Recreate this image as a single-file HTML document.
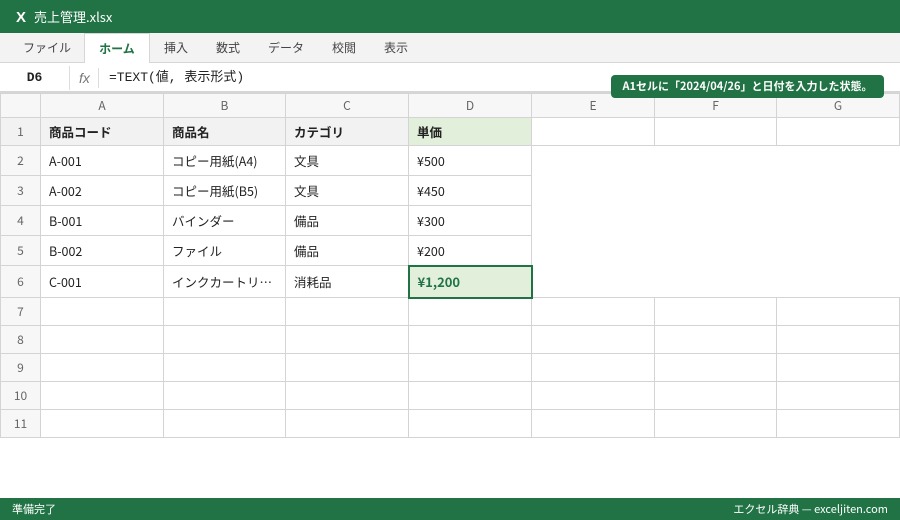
<!DOCTYPE html>
<html><head><meta charset="utf-8"><style>
*{margin:0;padding:0;box-sizing:border-box}
body{width:900px;height:520px;overflow:hidden;background:#fff;font-family:"Liberation Sans","Noto Sans CJK JP",sans-serif;font-size:13px;color:#222;position:relative}
.title{position:absolute;left:0;top:0;width:900px;height:33px;background:#217346;color:#fff;font-family:"Noto Sans CJK JP",sans-serif;font-size:13px;line-height:33px;padding-left:16px}
.title b{font-size:15px;margin-right:8px;font-family:"Liberation Sans",sans-serif}
.tabs{position:absolute;top:33px;left:0;width:900px;height:30px;background:#f3f3f3;border-bottom:1px solid #d6d6d6}
.tab{position:absolute;top:0;height:30px;line-height:30px;font-family:"Noto Sans CJK JP",sans-serif;font-size:12px;color:#444}
.tab.on{background:#fff;border:1px solid #d6d6d6;border-bottom:none;color:#217346;font-weight:bold;height:31px;text-align:center}
.fbar{position:absolute;top:63px;left:0;width:900px;height:30px;border-bottom:2px solid #d6d6d6;background:#fff}
.fbar .nm{position:absolute;left:0;top:3px;width:70px;height:24px;line-height:24px;text-align:center;font-weight:bold;font-size:13px;border-right:1px solid #ddd;font-family:"Liberation Mono",monospace}
.fbar .fx{position:absolute;left:79px;top:3px;line-height:24px;font-style:italic;color:#777;font-family:"Liberation Sans",sans-serif;font-size:14px}
.fbar .sep{position:absolute;left:98px;top:5px;height:20px;border-left:1px solid #ddd}
.fbar .f{position:absolute;left:109px;top:3px;line-height:24px;font-family:"Liberation Mono","Noto Sans CJK JP",monospace;font-size:13px}
table{position:absolute;top:93px;left:0;border-collapse:collapse;table-layout:fixed;font-family:"Noto Sans CJK JP",sans-serif;font-size:12.5px}
td{border:1px solid #d4d4d4;padding:0 8px;white-space:nowrap;overflow:hidden}
tr.h td{background:#f7f7f7;text-align:center;color:#666;font-size:12px}
td.r{background:#f7f7f7;text-align:center;color:#666;padding:0;font-size:12px}
tr.hd td{background:#f2f2f2;font-weight:bold}
td.d1{background:#e2efda!important}
td.n{border-top:none;border-bottom:none;border-left:none;border-right:none}
td.sel{border:2px solid #217346;background:#e2efda;color:#217346;font-weight:bold;font-size:13px}
.tip{position:absolute;left:611px;top:75px;width:273px;height:23px;background:#217346;color:#fff;border-radius:4px;font-family:"Noto Sans CJK JP",sans-serif;font-size:11px;font-weight:bold;line-height:23px;text-align:center}
.status{position:absolute;left:0;top:498px;width:900px;height:22px;background:#217346;color:#fff;font-family:"Noto Sans CJK JP",sans-serif;font-size:11px;line-height:22px;padding:0 12px}
.status span{float:right}
</style></head><body>
<div class="title"><b>X</b>売上管理.xlsx</div>
<div class="tabs">
<div class="tab" style="left:23px">ファイル</div>
<div class="tab on" style="left:84px;width:66px">ホーム</div>
<div class="tab" style="left:164px">挿入</div>
<div class="tab" style="left:216px">数式</div>
<div class="tab" style="left:268px">データ</div>
<div class="tab" style="left:332px">校閲</div>
<div class="tab" style="left:384px">表示</div>
</div>
<div class="fbar"><div class="nm">D6</div><div class="fx">fx</div><div class="sep"></div><div class="f">=TEXT(値, 表示形式)</div></div>
<table>
<colgroup><col style="width:40px"><col style="width:123px"><col style="width:122px"><col style="width:123px"><col style="width:123px"><col style="width:123px"><col style="width:122px"><col style="width:123px"></colgroup>
<tr class="h" style="height:24px"><td></td><td>A</td><td>B</td><td>C</td><td>D</td><td>E</td><td>F</td><td>G</td></tr>
<tr class="hd" style="height:28px"><td class="r" style="font-weight:normal">1</td><td>商品コード</td><td>商品名</td><td>カテゴリ</td><td class="d1">単価</td><td style="background:#fff"></td><td style="background:#fff"></td><td style="background:#fff"></td></tr>
<tr style="height:30px"><td class="r">2</td><td>A-001</td><td>コピー用紙(A4)</td><td>文具</td><td>¥500</td><td class="n"></td><td class="n"></td><td class="n"></td></tr>
<tr style="height:30px"><td class="r">3</td><td>A-002</td><td>コピー用紙(B5)</td><td>文具</td><td>¥450</td><td class="n"></td><td class="n"></td><td class="n"></td></tr>
<tr style="height:30px"><td class="r">4</td><td>B-001</td><td>バインダー</td><td>備品</td><td>¥300</td><td class="n"></td><td class="n"></td><td class="n"></td></tr>
<tr style="height:30px"><td class="r">5</td><td>B-002</td><td>ファイル</td><td>備品</td><td>¥200</td><td class="n"></td><td class="n"></td><td class="n"></td></tr>
<tr style="height:32px"><td class="r">6</td><td>C-001</td><td>インクカートリ…</td><td>消耗品</td><td class="sel">¥1,200</td><td class="n"></td><td class="n"></td><td class="n"></td></tr>
<tr style="height:28px"><td class="r">7</td><td></td><td></td><td></td><td></td><td></td><td></td><td></td></tr>
<tr style="height:28px"><td class="r">8</td><td></td><td></td><td></td><td></td><td></td><td></td><td></td></tr>
<tr style="height:28px"><td class="r">9</td><td></td><td></td><td></td><td></td><td></td><td></td><td></td></tr>
<tr style="height:28px"><td class="r">10</td><td></td><td></td><td></td><td></td><td></td><td></td><td></td></tr>
<tr style="height:28px"><td class="r">11</td><td></td><td></td><td></td><td></td><td></td><td></td><td></td></tr>
</table>
<div class="tip">A1セルに「2024/04/26」と日付を入力した状態。</div>
<div class="status">準備完了<span>エクセル辞典 — exceljiten.com</span></div>
</body></html>
